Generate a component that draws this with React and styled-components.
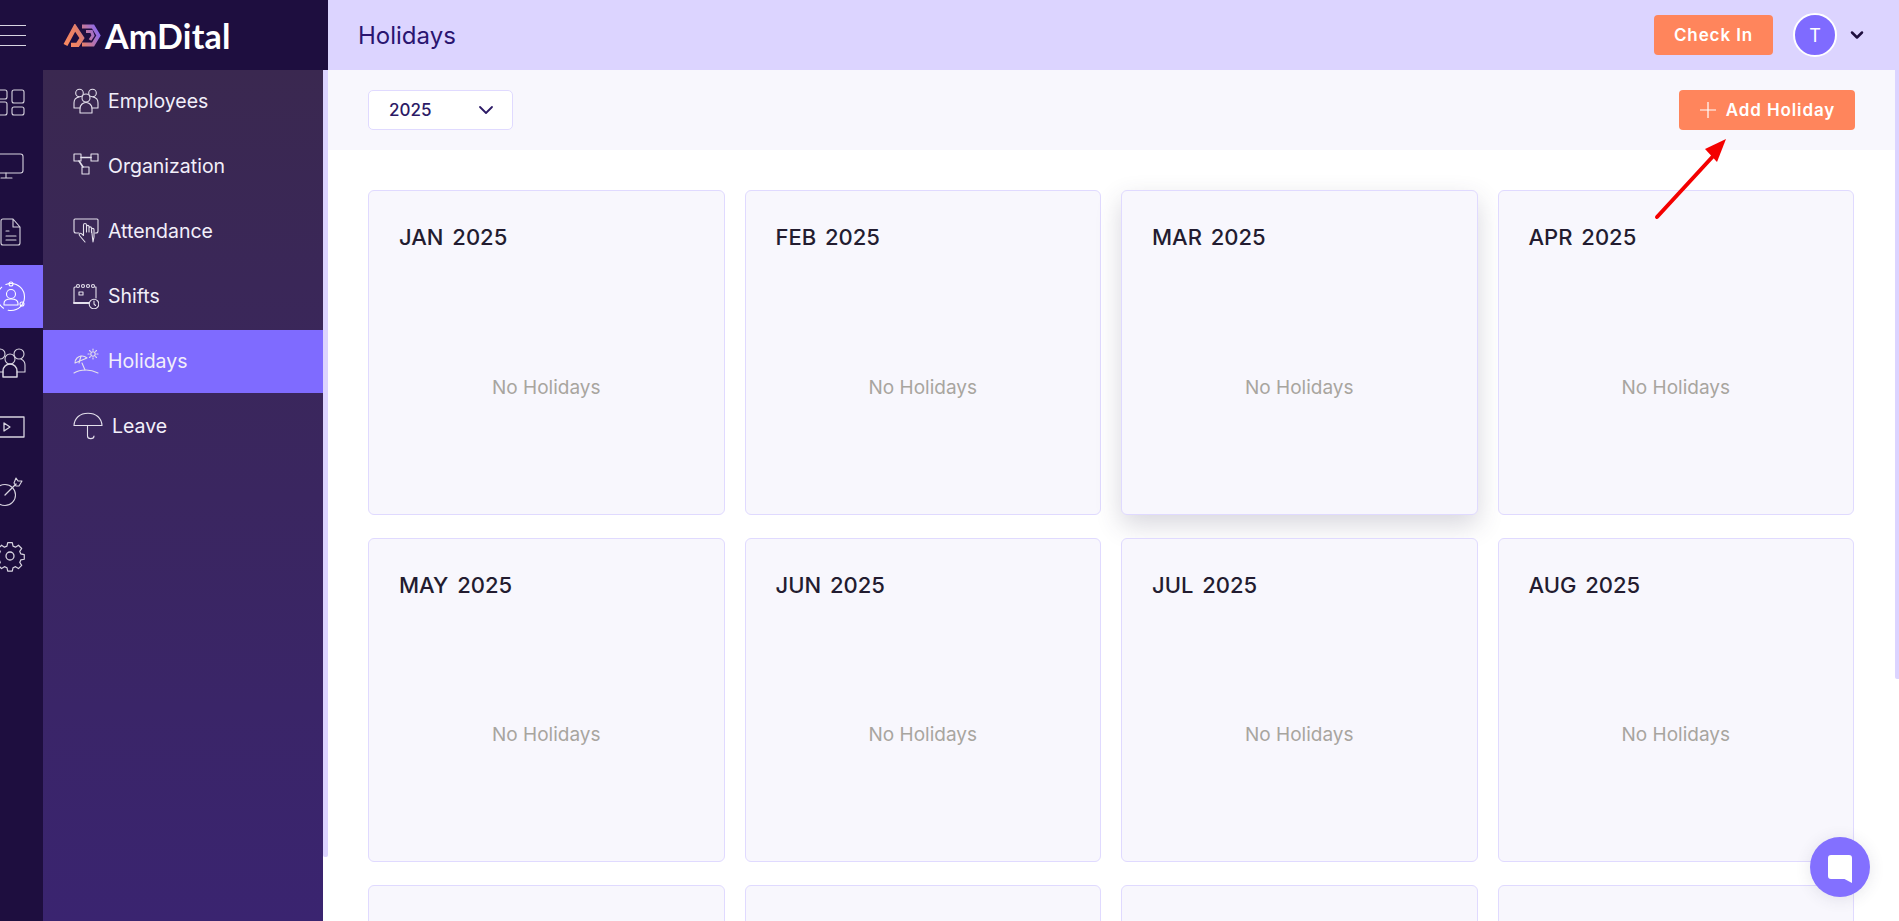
import styled, { createGlobalStyle } from "styled-components";
import { ChevronDown } from "lucide-react";

const GlobalStyle = createGlobalStyle`
  html, body { margin: 0; padding: 0; height: 100%; overflow: hidden; background: #fff; }
  body { font-family: "Inter", "Liberation Sans", sans-serif; }
  * { box-sizing: border-box; }
`;

const line = { fill: "none", stroke: "currentColor", strokeWidth: 1.1, strokeLinecap: "round", strokeLinejoin: "round" };

const Svg = ({ w = 26, h = 26, children }) => (
  <svg width={w} height={h} viewBox={`0 0 ${w} ${h}`} {...line}>{children}</svg>
);

const EmployeesIcon = () => (
  <Svg>
    <circle cx="6.5" cy="5" r="3.8" />
    <circle cx="19.5" cy="5" r="3.8" />
    <circle cx="13" cy="10" r="4" />
    <path d="M7 25v-4.500a6 6 0 0 1 12 0V25z" />
    <path d="M7 20H1v-5c0-3 2-5.500 5-6" />
    <path d="M19 20h6v-5c0-3-2-5.500-5-6" />
  </Svg>
);
const OrgIcon = () => (
  <Svg>
    <rect x="1" y="1" width="7" height="7" />
    <rect x="18" y="1" width="7" height="7" />
    <rect x="9" y="14" width="7" height="7" />
    <path d="M8 4.500h10M6 8l4 6" strokeWidth="1.600" />
  </Svg>
);
const AttendanceIcon = () => (
  <Svg>
    <path d="M6 15H3a2 2 0 0 1-2-2V2a1 1 0 0 1 1-1h22a1 1 0 0 1 1 1v11a2 2 0 0 1-2 2h-1" />
    <path d="M12 24l-5.500-6.500c-1-1.500.8-3 2.200-1.700l1.800 1.700V7c0-2 3-2 3 0v7M13.500 8.500c0-1.500 2.500-1.500 2.500 0V14M16 10c0-1.500 2.500-1.500 2.500 0v4.500M18.500 11.500c0-1.500 2.500-1.500 2.500 0V19l-1 5z" />
  </Svg>
);
const ShiftsIcon = () => (
  <Svg>
    <path d="M3 4H2a1 1 0 0 0-1 1v15h15M22 4h1v11" />
    <path d="M1 20h15" strokeWidth="1.800" />
    <circle cx="5" cy="3" r="1.500" />
    <circle cx="10" cy="3" r="1.500" />
    <circle cx="15" cy="3" r="1.500" />
    <circle cx="20" cy="3" r="1.500" />
    <rect x="6" y="9" width="4" height="3" />
    <circle cx="21" cy="21" r="4.800" />
    <path d="M21 18v3l1.500 1.500" />
  </Svg>
);
const HolidaysIcon = () => (
  <Svg>
    <path d="M2 15c0-4 3-7 7-7 2 0 3.500.7 5 2z" />
    <path d="M8 8l-2 7M9 15l3 7" />
    <path d="M1 25c3-2 8-3 12-3s8 1 12 3" />
    <circle cx="20" cy="6" r="2.200" />
    <path d="M20 1v1.200M20 9.800V11M15 6h1.200M23.800 6H25M16.500 2.500l.9.900M22.600 8.600l.9.900M16.500 9.500l.9-.9M22.600 3.400l.9-.9" />
  </Svg>
);
const LeaveIcon = () => (
  <Svg w={30} h={28}>
    <path d="M1 13.500C1.500 6 7 1.200 15 1.200S28.500 6 29 13.500z" />
    <path d="M14.500 14v10c0 3.500 6.500 3.500 6.500 0" />
  </Svg>
);

const navItems = [
  { label: "Employees", icon: <EmployeesIcon /> },
  { label: "Organization", icon: <OrgIcon /> },
  { label: "Attendance", icon: <AttendanceIcon /> },
  { label: "Shifts", icon: <ShiftsIcon /> },
  { label: "Holidays", icon: <HolidaysIcon />, active: true },
  { label: "Leave", icon: <LeaveIcon /> },
];

const railIcons = [
  <Svg w={32} h={32}>
    <rect x="0" y="4" width="12" height="9" rx="2" />
    <rect x="0" y="16" width="12" height="13" rx="2" />
    <rect x="17" y="4" width="12" height="13" rx="2" />
    <rect x="17" y="21" width="12" height="8" rx="2" />
  </Svg>,
  <Svg w={32} h={32}>
    <rect x="-2" y="3" width="30" height="19" rx="2.500" />
    <path d="M11 22v5M6 27h11" />
  </Svg>,
  <Svg w={32} h={32}>
    <path d="M8 3h10l7 8v16a2 2 0 0 1-2 2H8a2 2 0 0 1-2-2V5a2 2 0 0 1 2-2zM18 3v8h7" />
    <path d="M11 15h3M11 20h10M11 24h10" />
  </Svg>,
  <Svg w={32} h={32}>
    <circle cx="16" cy="16" r="13.500" strokeDasharray="24 5 24 5 27" />
    <circle cx="16" cy="3" r="2" />
    <circle cx="27" cy="23" r="2" />
    <circle cx="16" cy="13" r="4.500" />
    <path d="M9 24v-1.500c0-3 3-4.500 7-4.500s7 1.500 7 4.500V24z" />
  </Svg>,
  <Svg w={32} h={32}>
    <circle cx="5" cy="8" r="5" />
    <circle cx="24" cy="8" r="5" />
    <circle cx="15" cy="13" r="5" />
    <path d="M8 31v-6a7 7 0 0 1 14 0v6z" strokeWidth="1.500" />
    <path d="M0 26h8M22 26h8v-7c0-3-2-5-4-6" />
  </Svg>,
  <Svg w={32} h={32}>
    <path d="M-4 6h33v20H-4" strokeWidth="1.300" />
    <path d="M9 12l6 4-6 4z" strokeWidth="1.300" />
  </Svg>,
  <Svg w={32} h={32}>
    <circle cx="10" cy="19" r="10.500" />
    <path d="M10 19l11-11" strokeWidth="1.300" />
    <path d="M19 7l2-5 2 3 4 0-3 5-3 0z" />
  </Svg>,
  <Svg w={32} h={32}>
    <circle cx="15" cy="15" r="4" strokeWidth="1.300" />
    <path
      d="M12.500 2h5l.8 3.800 2.700 1.100 3.200-2.100 3.500 3.500-2.100 3.200 1.100 2.700 3.800.8v5l-3.800.8-1.100 2.700 2.100 3.200-3.500 3.500-3.200-2.100-2.700 1.100-.8 3.800h-5l-.8-3.800-2.700-1.100-3.200 2.100-3.500-3.500 2.100-3.200-1.100-2.700-3.800-.8v-5l3.800-.8 1.100-2.700-2.100-3.200 3.500-3.500 3.200 2.100 2.700-1.100z"
      transform="translate(15 15) scale(.92) translate(-15 -16.500)"
      strokeWidth="1.300"
    />
  </Svg>,
];

const months = ["JAN", "FEB", "MAR", "APR", "MAY", "JUN", "JUL", "AUG"];

export default function App() {
  return (
    <Shell>
      <GlobalStyle />
      <Side>
        <SideTop>
          <MenuSlot>
            <Burger><i /><i /><i /></Burger>
          </MenuSlot>
          <Logo>
            <svg width="38" height="23" viewBox="0 0 38 23" fill="none" strokeLinejoin="miter">
              <defs>
                <linearGradient id="logoGrad" gradientUnits="userSpaceOnUse" x1="0" y1="22" x2="38" y2="6">
                  <stop offset="0" stopColor="#ff8a5f" />
                  <stop offset="0.45" stopColor="#e57f68" />
                  <stop offset="1" stopColor="#7f66ff" />
                </linearGradient>
              </defs>
              <path d="M2.500 21L12 3.500 19 14l-4.500 7H8" stroke="url(#logoGrad)" strokeWidth="4.400" />
              <path d="M19 2.500h11L35.500 11.500 30 20.500H19" stroke="url(#logoGrad)" strokeWidth="3.800" />
              <path d="M23 7.500h5.500l1.500 4-3 4.500" stroke="url(#logoGrad)" strokeWidth="3" />
            </svg>
            <LogoText>AmDital</LogoText>
          </Logo>
        </SideTop>
        <SideBody>
          <Rail>
            {railIcons.map((icon, i) => (
              <RailItem key={i} $active={i === 3}>{icon}</RailItem>
            ))}
          </Rail>
          <SubNav>
            {navItems.map((item) => (
              <NavRow key={item.label} $active={item.active}>
                {item.icon}
                <span>{item.label}</span>
              </NavRow>
            ))}
          </SubNav>
          <SideThumb />
        </SideBody>
      </Side>

      <Main>
        <TopBar>
          <PageTitle>Holidays</PageTitle>
          <TopActions>
            <CheckIn>Check In</CheckIn>
            <Avatar>T</Avatar>
            <ChevronDown size={20} strokeWidth={3} color="#1e0e3f" />
          </TopActions>
        </TopBar>
        <Toolbar>
          <YearSelect>
            <span>2025</span>
            <ChevronDown size={24} strokeWidth={1.8} color="#2c1a66" />
          </YearSelect>
          <AddButton>
            <svg width="18" height="18" viewBox="0 0 18 18" stroke="#fff" strokeWidth="1.200">
              <path d="M9 1v16M1 9h16" />
            </svg>
            Add Holiday
          </AddButton>
          <Arrow width="76" height="86" viewBox="0 0 76 86" fill="none">
            <path d="M3 82L62 18" stroke="#f40000" strokeWidth="4" strokeLinecap="round" />
            <path d="M72 4L51 14l12 13z" fill="#f40000" />
          </Arrow>
        </Toolbar>
        <Grid>
          {months.map((m) => (
            <Card key={m} $raised={m === "MAR"}>
              <CardTitle>{m} 2025</CardTitle>
              <CardEmpty>No Holidays</CardEmpty>
            </Card>
          ))}
          <Card />
          <Card />
          <Card />
          <Card />
        </Grid>
        <MainThumb />
      </Main>

      <ChatButton>
        <svg width="26" height="30" viewBox="0 0 26 30">
          <path d="M4 1h18a3 3 0 0 1 3 3v25l-7.500-4H4a3 3 0 0 1-3-3V4a3 3 0 0 1 3-3z" fill="#fff" />
        </svg>
      </ChatButton>
    </Shell>
  );
}

const Shell = styled.div`
  display: flex;
  width: 100%;
  height: 100vh;
  overflow: hidden;
`;

const Side = styled.aside`
  flex: 0 0 328px;
  display: flex;
  flex-direction: column;
  background: #fff;
`;

const SideTop = styled.div`
  flex: 0 0 70px;
  display: flex;
  background: #1e0e3f;
`;

const MenuSlot = styled.div`
  flex: 0 0 63px;
  overflow: hidden;
  display: flex;
  align-items: center;
`;

const Burger = styled.div`
  display: flex;
  flex-direction: column;
  gap: 8.500px;
  width: 26px;
  margin-top: 1px;
  i {
    display: block;
    height: 1.500px;
    background: #d9d5e2;
  }
`;

const Logo = styled.div`
  display: flex;
  align-items: center;
  gap: 4px;
`;

const LogoText = styled.div`
  font-family: "Lato", sans-serif;
  font-size: 34px;
  font-weight: 700;
  color: #fff;
  letter-spacing: 0.2px;
`;

const SideBody = styled.div`
  position: relative;
  flex: 1;
  display: flex;
  min-height: 0;
  padding-right: 5px;
`;

const Rail = styled.nav`
  flex: 0 0 43px;
  display: flex;
  flex-direction: column;
  gap: 2px;
  overflow: hidden;
  background: #1e0e3f;
  color: #d8d4e0;
`;

const RailItem = styled.div`
  flex: 0 0 63px;
  display: flex;
  align-items: center;
  color: ${(p) => (p.$active ? "#fff" : "#d8d4e0")};
  background: ${(p) => (p.$active ? "#7f6bff" : "transparent")};
  svg {
    flex: none;
    margin-left: -5px;
    overflow: visible;
  }
`;

const SubNav = styled.nav`
  flex: 1;
  display: flex;
  flex-direction: column;
  gap: 2px;
  background: linear-gradient(180deg, #3a2850 0%, #3a2470 100%);
`;

const NavRow = styled.a`
  flex: 0 0 63px;
  display: flex;
  align-items: center;
  gap: 9px;
  padding: 0 0 1px 30px;
  font-size: 19.500px;
  color: #f2effa;
  background: ${(p) => (p.$active ? "#7f6bff" : "transparent")};
  svg {
    flex: none;
    color: #e4e0ec;
  }
`;

const SideThumb = styled.div`
  position: absolute;
  top: 0;
  right: 0;
  width: 5px;
  height: 787px;
  background: #dcd4ff;
  border-radius: 0 0 2px 2px;
`;

const Main = styled.main`
  position: relative;
  flex: 1;
  min-width: 0;
  display: flex;
  flex-direction: column;
`;

const TopBar = styled.header`
  flex: 0 0 70px;
  display: flex;
  align-items: center;
  justify-content: space-between;
  padding: 0 32px 0 30px;
  background: #dcd4ff;
`;

const PageTitle = styled.h1`
  margin: 0;
  font-size: 24px;
  font-weight: 400;
  color: #2a1470;
`;

const TopActions = styled.div`
  display: flex;
  align-items: center;
`;

const Button = styled.button`
  height: 40px;
  border: 0;
  border-radius: 4px;
  background: #ff855c;
  color: #fff;
  font-family: inherit;
  font-size: 17px;
  font-weight: 600;
  letter-spacing: 0.9px;
`;

const CheckIn = styled(Button)`
  width: 119px;
  margin-right: 20px;
`;

const Avatar = styled.div`
  width: 44px;
  height: 44px;
  margin-right: 10px;
  display: flex;
  align-items: center;
  justify-content: center;
  border: 2px solid #fff;
  border-radius: 50%;
  background: #7f6bff;
  color: #fff;
  font-size: 18px;
`;

const Toolbar = styled.div`
  position: relative;
  flex: 0 0 80px;
  display: flex;
  align-items: center;
  justify-content: space-between;
  margin-right: 4px;
  padding: 0 40px;
  background: #f8f7fd;
`;

const YearSelect = styled.div`
  width: 145px;
  height: 40px;
  display: flex;
  align-items: center;
  justify-content: space-between;
  padding: 0 14px 0 20px;
  border: 1px solid #e0daff;
  border-radius: 5px;
  background: #fff;
  font-size: 17px;
  font-weight: 500;
  color: #2c1a66;
`;

const AddButton = styled(Button)`
  width: 176px;
  display: flex;
  align-items: center;
  justify-content: center;
  gap: 9px;
`;

const Arrow = styled.svg`
  position: absolute;
  top: 65px;
  right: 165px;
`;

const Grid = styled.section`
  display: grid;
  grid-template-columns: repeat(4, 356.500px);
  gap: 23px 20px;
  margin-right: 4px;
  padding: 40px 40px 0;
`;

const Card = styled.article`
  height: 324.500px;
  display: flex;
  flex-direction: column;
  padding: 30px;
  border: 1px solid #e0daff;
  border-radius: 6px;
  background: #f8f7fd;
  box-shadow: ${(p) => (p.$raised ? "0 10px 26px rgba(60, 55, 90, 0.2)" : "none")};
`;

const CardTitle = styled.h2`
  margin: 0;
  font-size: 22px;
  line-height: 32px;
  font-weight: 500;
  word-spacing: 3px;
  color: #231c30;
`;

const CardEmpty = styled.div`
  flex: 1;
  display: flex;
  align-items: center;
  justify-content: center;
  padding-top: 38px;
  font-size: 19px;
  color: #a8a59f;
`;

const MainThumb = styled.div`
  position: absolute;
  top: 0;
  right: 0;
  width: 4px;
  height: 679px;
  background: #dcd4ff;
  border-radius: 0 0 0 2px;
`;

const ChatButton = styled.button`
  position: fixed;
  right: 29px;
  bottom: 24px;
  width: 60px;
  height: 60px;
  display: flex;
  align-items: center;
  justify-content: center;
  padding: 0;
  border: 0;
  border-radius: 50%;
  background: #8370ff;
  box-shadow: 0 2px 16px rgba(60, 55, 90, 0.12);
  svg { margin-top: 3px; }
`;
